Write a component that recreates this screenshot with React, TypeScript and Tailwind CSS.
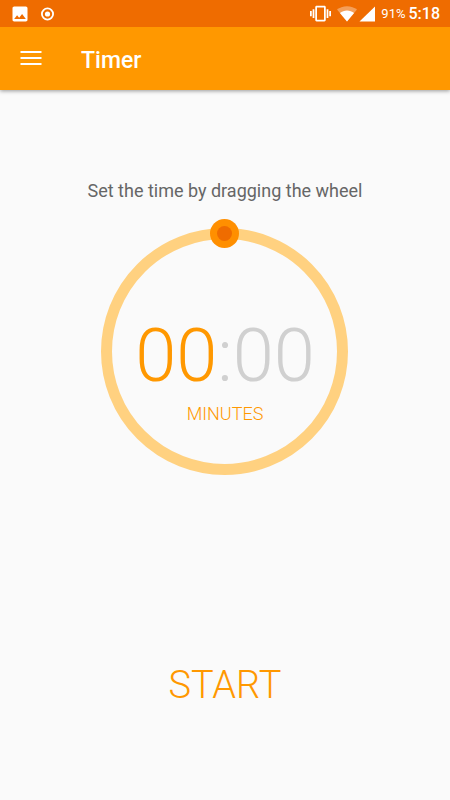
import { useState } from "react";
import { MdImage, MdVibration } from "react-icons/md";

const CIRCUMFERENCE = 2 * Math.PI * 118;

function StatusBar() {
  return (
    <div className="relative z-10 flex h-[27px] items-center justify-between bg-[#ef6c00] px-[10px] text-white">
      <div className="flex items-center gap-[10px]">
        <MdImage className="size-5" />
        <svg viewBox="0 0 14 14" className="size-[14px]" aria-hidden="true">
          <circle cx="7.5" cy="7" r="5.6" fill="none" stroke="currentColor" strokeWidth="1.8" />
          <circle cx="7.5" cy="7" r="2.6" fill="currentColor" />
        </svg>
      </div>
      <div className="flex items-center">
        <MdVibration className="size-[21px]" />
        <svg viewBox="0 0 20 16" className="ml-[6px] h-4 w-5" aria-hidden="true">
          <path d="M10 15.5 0 3.6C2.6 1.5 6 .2 10 .2s7.4 1.3 10 3.4z" fill="currentColor" opacity=".35" />
          <path d="M10 15.5 2.9 7C4.9 5.4 7.3 4.5 10 4.5s5.1.9 7.1 2.5z" fill="currentColor" />
        </svg>
        <svg viewBox="0 0 16 16" className="ml-[2px] size-4" aria-hidden="true">
          <path d="M16 .5v15H.5z" fill="currentColor" />
        </svg>
        <span className="ml-[6px] text-[13px]">91%</span>
        <span className="ml-[3px] text-[16px] font-medium">5:18</span>
      </div>
    </div>
  );
}

function Wheel({ minutes, onChange }: { minutes: number; onChange: (value: number) => void }) {
  const progress = minutes / 60;

  return (
    <div className="relative mt-4 size-[265px]">
      <svg viewBox="0 0 265 265" className="size-full overflow-visible" aria-hidden="true">
        <g transform="translate(131.5 132.5)">
          <circle r="118" fill="none" stroke="#ffd180" strokeWidth="11" />
          {minutes > 0 && (
            <circle
              r="118"
              fill="none"
              stroke="#ff9800"
              strokeWidth="11"
              strokeDasharray={`${progress * CIRCUMFERENCE} ${CIRCUMFERENCE}`}
              transform="rotate(-90)"
            />
          )}
          <g transform={`rotate(${progress * 360})`}>
            <circle cy="-118" r="14.5" fill="#ff8f00" />
            <circle cy="-118" r="7.5" fill="#ef6c00" />
          </g>
        </g>
      </svg>
      <div className="absolute inset-0 flex flex-col items-center pt-[94px]">
        <div className="text-[74px] leading-[86px] font-light text-[#d0d0d0]">
          <span className="text-[#ff9800]">{String(minutes).padStart(2, "0")}</span>:00
        </div>
        <div className="mt-[5px] text-[18px] leading-5 font-light text-[#ff9800]">MINUTES</div>
      </div>
      <input
        id="minutes"
        type="range"
        min={0}
        max={59}
        value={minutes}
        onChange={(e) => onChange(Number(e.target.value))}
        className="absolute inset-0 size-full cursor-pointer opacity-0"
      />
    </div>
  );
}

export default function App() {
  const [minutes, setMinutes] = useState(0);

  return (
    <div className="flex min-h-dvh flex-col bg-[#fafafa] font-[Roboto,sans-serif]">
      <StatusBar />
      <header className="flex h-[63px] items-center bg-[#ff9800] pl-5 text-white shadow-[0_1px_4px_rgba(0,0,0,0.4)]">
        <button type="button" aria-label="Menu">
          <svg viewBox="0 0 22 15" className="h-[15px] w-[22px]" aria-hidden="true">
            <path d="M.5 0h21v2H.5zM.5 6h21v2H.5zM.5 12h21v2H.5z" fill="currentColor" />
          </svg>
        </button>
        <h1 className="ml-[39px] pt-[6px] text-[23px] font-medium">Timer</h1>
      </header>

      <main className="flex flex-1 flex-col items-center pt-[89px] pb-[91px]">
        <label htmlFor="minutes" className="text-[18px] leading-6 text-[#666666]">
          Set the time by dragging the wheel
        </label>
        <Wheel minutes={minutes} onChange={setMinutes} />
        <button
          type="button"
          className="mt-auto text-[38px] leading-[48px] font-light text-[#ff9800]"
        >
          START
        </button>
      </main>
    </div>
  );
}
